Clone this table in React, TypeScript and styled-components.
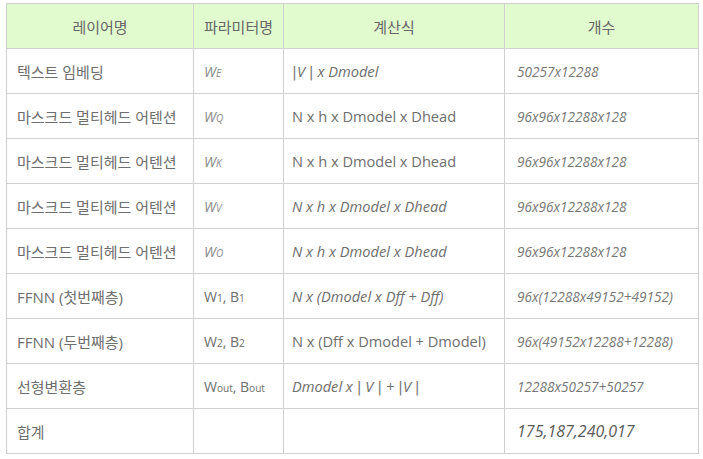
import styled, { createGlobalStyle } from 'styled-components'

const GlobalStyle = createGlobalStyle`
  body {
    margin: 0;
    background: #fff;
    font-family: 'Open Sans', 'Noto Sans CJK KR', sans-serif;
  }
`

type Row = {
  layer: string
  param: React.ReactNode
  formula: React.ReactNode
  formulaItalic?: boolean
  count: string
  big?: boolean
}

const Sub = styled.span`
  font-size: 0.72em;
`

const Bar = styled.span`
  font-family: 'DejaVu Sans', sans-serif;
  font-weight: 300;
  color: #777;
`

const rows: Row[] = [
  { layer: '텍스트 임베딩', param: <i>W<Sub>E</Sub></i>, formula: <><Bar>|</Bar>V <Bar>|</Bar> x Dmodel</>, formulaItalic: true, count: '50257x12288' },
  { layer: '마스크드 멀티헤드 어텐션', param: <i>W<Sub>Q</Sub></i>, formula: 'N x h x Dmodel x Dhead', count: '96x96x12288x128' },
  { layer: '마스크드 멀티헤드 어텐션', param: <i>W<Sub>K</Sub></i>, formula: 'N x h x Dmodel x Dhead', count: '96x96x12288x128' },
  { layer: '마스크드 멀티헤드 어텐션', param: <i>W<Sub>V</Sub></i>, formula: 'N x h x Dmodel x Dhead', formulaItalic: true, count: '96x96x12288x128' },
  { layer: '마스크드 멀티헤드 어텐션', param: <i>W<Sub>O</Sub></i>, formula: 'N x h x Dmodel x Dhead', formulaItalic: true, count: '96x96x12288x128' },
  { layer: 'FFNN (첫번째층)', param: <>W<Sub>1</Sub>, B<Sub>1</Sub></>, formula: 'N x (Dmodel x Dff + Dff)', formulaItalic: true, count: '96x(12288x49152+49152)' },
  { layer: 'FFNN (두번째층)', param: <>W<Sub>2</Sub>, B<Sub>2</Sub></>, formula: 'N x (Dff x Dmodel + Dmodel)', count: '96x(49152x12288+12288)' },
  { layer: '선형변환층', param: <>W<Sub>out</Sub>, B<Sub>out</Sub></>, formula: <>Dmodel x <Bar>|</Bar> V <Bar>|</Bar> + <Bar>|</Bar>V <Bar>|</Bar></>, formulaItalic: true, count: '12288x50257+50257' },
  { layer: '합계', param: '', formula: '', count: '175,187,240,017', big: true },
]

const App = () => {
  return (
    <Page>
      <GlobalStyle />
      <Table>
        <colgroup>
          <col style={{ width: 187 }} />
          <col style={{ width: 90 }} />
          <col style={{ width: 221 }} />
          <col style={{ width: 194 }} />
        </colgroup>
        <thead>
          <tr>
            <Th>레이어명</Th>
            <Th>파라미터명</Th>
            <Th>계산식</Th>
            <Th>개수</Th>
          </tr>
        </thead>
        <tbody>
          {rows.map((r, i) => (
            <tr key={i}>
              <LayerTd>{r.layer}</LayerTd>
              <ParamTd>{r.param}</ParamTd>
              <FormulaTd $italic={r.formulaItalic}>{r.formula}</FormulaTd>
              <CountTd $big={r.big}>{r.count}</CountTd>
            </tr>
          ))}
        </tbody>
      </Table>
    </Page>
  )
}

export default App

const Page = styled.div`
  padding: 3px 0 0 6px;
`

const Table = styled.table`
  border-collapse: collapse;
  table-layout: fixed;
  width: 693px;
  border: 1px solid #d0d0d0;
`

const Th = styled.th`
  height: 44px;
  padding: 0 10px;
  background: #e1fbcf;
  border: 1px solid #d0d0d0;
  font-family: 'Noto Sans CJK KR', sans-serif;
  font-weight: 400;
  font-size: 15px;
  color: #666;
  text-align: center;
`

const Td = styled.td<{ $italic?: boolean }>`
  height: 44px;
  padding: 0 10px;
  border: 1px solid #d0d0d0;
  font-family: 'Open Sans', 'Noto Sans CJK KR', sans-serif;
  font-size: 14px;
  font-style: ${p => (p.$italic ? 'italic' : 'normal')};
  color: #6e6e6e;
  white-space: nowrap;
`

const LayerTd = styled(Td)`
  font-size: 15px;
`

const ParamTd = styled(Td)`
  font-size: 14px;
  i {
    color: #8a8a8a;
  }
`

const FormulaTd = styled(Td)`
  padding-left: 8px;
  font-size: 14.6px;
`

const CountTd = styled(Td)<{ $big?: boolean }>`
  padding-left: 12px;
  font-style: italic;
  font-size: ${p => (p.$big ? '16px' : '13.6px')};
  color: ${p => (p.$big ? '#5a5a5a' : '#777')};
`
